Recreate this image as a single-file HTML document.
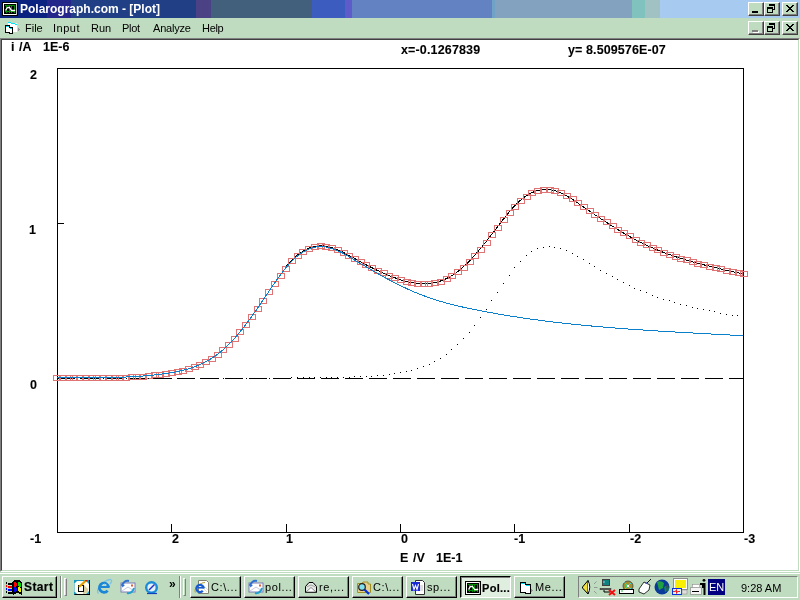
<!DOCTYPE html>
<html><head><meta charset="utf-8">
<style>
*{margin:0;padding:0;box-sizing:border-box}
html,body{-webkit-font-smoothing:antialiased;width:800px;height:600px;overflow:hidden;background:#C0DCC0;font-family:"Liberation Sans",sans-serif}
.abs{position:absolute}
.t{position:absolute;white-space:nowrap;line-height:1;will-change:transform}
#title{left:0;top:0;width:800px;height:18px;
background:linear-gradient(to right,#0B2380 0,#0B2380 47px,#25268A 47px,#25268A 71px,#203F85 71px,#203F85 196px,#4A4284 196px,#4A4284 211px,#425F7C 211px,#425F7C 312px,#3D5CC0 312px,#3D5CC0 345px,#5E5CCB 345px,#5E5CCB 352px,#6282C2 352px,#6282C2 492px,#70A2C6 492px,#70A2C6 495px,#82A2BF 495px,#82A2BF 632px,#80C2BE 632px,#80C2BE 645px,#A0C2C2 645px,#A0C2C2 660px,#A6CAF0 660px)}
.btn{position:absolute;width:16px;height:14px;background:#C0DCC0;border-style:solid;border-width:1px;border-color:#FFFFFF #404040 #404040 #FFFFFF;box-shadow:inset -1px -1px 0 #808080}
.menu{font-size:11px;color:#000;top:23px}
.ax{font-size:12.5px;font-weight:bold;color:#000;-webkit-text-stroke:0.1px #000}
.tb{position:absolute;top:576px;height:22px;background:#C0DCC0;border-style:solid;border-width:1px;border-color:#FFF #000 #000 #FFF;box-shadow:inset -1px -1px 0 #808080}
.tbt{font-size:11px;color:#000;position:absolute;top:5px;white-space:nowrap;line-height:1}
</style></head><body>
<div id="title" class="abs"></div>
<!-- title icon -->
<svg class="abs" style="left:0;top:0" width="20" height="18" viewBox="0 0 20 18" shape-rendering="crispEdges">
<rect x="2" y="2" width="16" height="14" fill="#000"/>
<rect x="3" y="3" width="14" height="12" fill="#fff"/>
<rect x="16" y="3" width="1" height="12" fill="#C8C8C8"/>
<rect x="4" y="4" width="12" height="10" fill="#000"/>
<path d="M5 5h10v1h-10zM5 11h10v1h-10zM6 5h1v8h-1zM9 5h1v8h-1zM11 5h1v8h-1zM14 5h1v8h-1z" fill="#008C00"/>
<path d="M5.5 10.5 L7.5 7.5 H9.5 L11.5 10.5 H14.5 L15 10" stroke="#fff" stroke-width="1.3" fill="none" shape-rendering="auto"/>
</svg>
<div class="t" style="left:20px;top:3px;font-size:12px;font-weight:bold;color:#fff">Polarograph.com - [Plot]</div>
<!-- title buttons -->
<div class="btn" style="left:748px;top:2px"><div class="abs" style="left:3px;top:8px;width:6px;height:2px;background:#000"></div></div>
<div class="btn" style="left:764px;top:2px"><svg class="abs" style="left:-1px;top:-1px" width="16" height="14" shape-rendering="crispEdges"><path d="M5 2h6v2h-6zM10 4h1v4h-1zM8 7h3v1h-3zM3 5h6v2h-6zM3 7h1v4h-1zM8 7h1v4h-1zM3 10h6v1h-6z" fill="#000"/></svg></div>
<div class="btn" style="left:782px;top:2px"><svg class="abs" style="left:-1px;top:-1px" width="16" height="14" shape-rendering="crispEdges"><path d="M4 3h2v1h-2zM10 3h2v1h-2zM5 4h2v1h-2zM9 4h2v1h-2zM6 5h4v1h-4zM7 6h2v1h-2zM6 7h4v1h-4zM5 8h2v1h-2zM9 8h2v1h-2zM4 9h2v1h-2zM10 9h2v1h-2z" fill="#000"/></svg></div>
<!-- menu bar -->
<svg class="abs" style="left:0;top:18px" width="22" height="18" viewBox="0 0 22 18" shape-rendering="crispEdges">
<path d="M8 4h3v1h6v9h-9z" fill="#fff"/>
<path d="M7 4h1v1h-1zM11 4h1v1h-1zM17 5h1v1h-1zM17 6h1v8h-1z" fill="#E8D0D0"/>
<path d="M8 4h3v1h-3zM11 5h4v1h-4zM15 6h2v1h-2z" fill="#00E8F8"/>
<path d="M18 10h1v3h-1zM19 11h1v1h-1z" fill="#909090"/>
<path d="M6 8h3v6h-3zM9 10h3v5h-3z" fill="#fff"/>
<path d="M5 7h4v1h-4zM5 7h1v8h-1zM9 7h1v3h-1zM9 9h4v1h-4zM12 9h1v7h-1zM5 14h4v1h-4zM9 14h1v2h-1zM9 15h4v1h-4z" fill="#000"/>
<path d="M6 8h3v1h-3zM10 10h2v1h-2z" fill="#00E0F0"/>
</svg>
<div class="t menu" style="left:25px">File</div>
<div class="t menu" style="left:53px;letter-spacing:0.5px">Input</div>
<div class="t menu" style="left:91px">Run</div>
<div class="t menu" style="left:122px;letter-spacing:-0.3px">Plot</div>
<div class="t menu" style="left:153px;letter-spacing:-0.2px">Analyze</div>
<div class="t menu" style="left:202px;letter-spacing:-0.3px">Help</div>
<div class="btn" style="left:748px;top:21px"><div class="abs" style="left:3px;top:8px;width:6px;height:2px;background:#808080;box-shadow:1px 1px 0 #fff"></div></div>
<div class="btn" style="left:764px;top:21px"><svg class="abs" style="left:-1px;top:-1px" width="16" height="14" shape-rendering="crispEdges"><path d="M5 2h6v2h-6zM10 4h1v4h-1zM8 7h3v1h-3zM3 5h6v2h-6zM3 7h1v4h-1zM8 7h1v4h-1zM3 10h6v1h-6z" fill="#000"/></svg></div>
<div class="btn" style="left:782px;top:21px"><svg class="abs" style="left:-1px;top:-1px" width="16" height="14" shape-rendering="crispEdges"><path d="M4 3h2v1h-2zM10 3h2v1h-2zM5 4h2v1h-2zM9 4h2v1h-2zM6 5h4v1h-4zM7 6h2v1h-2zM6 7h4v1h-4zM5 8h2v1h-2zM9 8h2v1h-2zM4 9h2v1h-2zM10 9h2v1h-2z" fill="#000"/></svg></div>
<!-- client area -->
<div class="abs" style="left:0;top:38px;width:800px;height:534px;background:#fff;border-style:solid;border-width:1px;border-color:#808080 #fff #fff #808080"></div>
<div class="abs" style="left:1px;top:39px;width:798px;height:532px;border-style:solid;border-width:1px;border-color:#404040 #C0DCC0 #C0DCC0 #404040"></div>
<!-- plot -->
<svg class="abs" style="left:0;top:0" width="800" height="600" viewBox="0 0 800 600" shape-rendering="auto">
<rect x="57.5" y="68.5" width="686" height="464" fill="none" stroke="#000" stroke-width="1"/>
<path d="M57 223.5h7M57 378.5h7M171.5 524v8M286.5 524v8M400.5 524v8M514.5 524v8M629.5 524v8" stroke="#000" stroke-width="1"/>
<path d="M57 378.5H743" stroke="#000" stroke-width="1" stroke-dasharray="18 6" shape-rendering="crispEdges"/>
<path d="M57.0 377.46 L59.0 377.46 L61.0 377.47 L63.0 377.47 L65.0 377.48 L67.0 377.49 L69.0 377.51 L71.0 377.52 L73.0 377.53 L75.0 377.54 L77.0 377.55 L79.0 377.57 L81.0 377.58 L83.0 377.59 L85.0 377.60 L87.0 377.60 L89.0 377.61 L91.0 377.61 L93.0 377.61 L95.0 377.61 L97.0 377.60 L99.0 377.59 L101.0 377.58 L103.0 377.56 L105.0 377.54 L107.0 377.52 L109.0 377.49 L111.0 377.46 L113.0 377.42 L115.0 377.37 L117.0 377.32 L119.0 377.26 L121.0 377.20 L123.0 377.13 L125.0 377.05 L127.0 376.97 L129.0 376.88 L131.0 376.78 L133.0 376.67 L135.0 376.55 L137.0 376.43 L139.0 376.30 L141.0 376.15 L143.0 376.00 L145.0 375.84 L147.0 375.67 L149.0 375.49 L151.0 375.29 L153.0 375.09 L155.0 374.88 L157.0 374.65 L159.0 374.41 L161.0 374.17 L163.0 373.90 L165.0 373.63 L167.0 373.34 L169.0 373.04 L171.0 372.72 L173.0 372.38 L175.0 372.02 L177.0 371.64 L179.0 371.22 L181.0 370.78 L183.0 370.30 L185.0 369.79 L187.0 369.24 L189.0 368.65 L191.0 368.01 L193.0 367.33 L195.0 366.60 L197.0 365.82 L199.0 364.98 L201.0 364.09 L203.0 363.14 L205.0 362.13 L207.0 361.05 L209.0 359.91 L211.0 358.70 L213.0 357.41 L215.0 356.05 L217.0 354.61 L219.0 353.10 L221.0 351.50 L223.0 349.81 L225.0 348.04 L227.0 346.17 L229.0 344.22 L231.0 342.17 L233.0 340.03 L235.0 337.80 L237.0 335.50 L239.0 333.11 L241.0 330.66 L243.0 328.14 L245.0 325.55 L247.0 322.91 L249.0 320.21 L251.0 317.46 L253.0 314.66 L255.0 311.82 L257.0 308.95 L259.0 306.04 L261.0 303.10 L263.0 300.14 L265.0 297.16 L267.0 294.18 L269.0 291.20 L271.0 288.23 L273.0 285.29 L275.0 282.39 L277.0 279.55 L279.0 276.76 L281.0 274.05 L283.0 271.43 L285.0 268.91 L287.0 265.45 L289.0 263.16 L291.0 261.01 L293.0 259.00 L295.0 257.14 L297.0 255.43 L299.0 253.86 L301.0 252.43 L303.0 251.15 L305.0 250.00 L307.0 249.00 L309.0 248.13 L311.0 247.40 L313.0 246.80 L315.0 246.34 L317.0 246.01 L319.0 245.81 L321.0 245.74 L323.0 245.79 L325.0 245.98 L327.0 246.28 L329.0 246.71 L331.0 247.24 L333.0 247.88 L335.0 248.60 L337.0 249.41 L339.0 250.28 L341.0 251.22 L343.0 252.21 L345.0 253.25 L347.0 254.32 L349.0 255.41 L351.0 256.52 L353.0 257.64 L355.0 258.75 L357.0 259.86 L359.0 260.95 L361.0 262.03 L363.0 263.11 L365.0 264.16 L367.0 265.21 L369.0 266.24 L371.0 267.25 L373.0 268.25 L375.0 269.23 L377.0 270.19 L379.0 271.13 L381.0 272.05 L383.0 272.95 L385.0 273.82 L387.0 274.68 L389.0 275.51 L391.0 276.31 L393.0 277.09 L395.0 277.84 L397.0 278.56 L399.0 279.25 L401.0 279.90 L403.0 280.51 L405.0 281.09 L407.0 281.62 L409.0 282.09 L411.0 282.52 L413.0 282.89 L415.0 283.21 L417.0 283.46 L419.0 283.65 L421.0 283.77 L423.0 283.82 L425.0 283.80 L427.0 283.70 L429.0 283.53 L431.0 283.29 L433.0 282.96 L435.0 282.55 L437.0 282.06 L439.0 281.49 L441.0 280.82 L443.0 280.07 L445.0 279.23 L447.0 278.29 L449.0 277.25 L451.0 276.12 L453.0 274.89 L455.0 273.55 L457.0 272.11 L459.0 270.57 L461.0 268.92 L463.0 267.18 L465.0 265.34 L467.0 263.42 L469.0 261.42 L471.0 259.34 L473.0 257.19 L475.0 254.96 L477.0 252.68 L479.0 250.34 L481.0 247.95 L483.0 245.51 L485.0 243.02 L487.0 240.50 L489.0 237.94 L491.0 235.35 L493.0 232.74 L495.0 230.11 L497.0 227.48 L499.0 224.85 L501.0 222.25 L503.0 219.67 L505.0 217.14 L507.0 214.66 L509.0 212.25 L511.0 209.92 L513.0 207.67 L515.0 205.53 L517.0 203.51 L519.0 201.60 L521.0 199.84 L523.0 198.22 L525.0 196.74 L527.0 195.39 L529.0 194.19 L531.0 193.13 L533.0 192.20 L535.0 191.42 L537.0 190.76 L539.0 190.24 L541.0 189.85 L543.0 189.60 L545.0 189.47 L547.0 189.47 L549.0 189.61 L551.0 189.87 L553.0 190.25 L555.0 190.76 L557.0 191.39 L559.0 192.14 L561.0 192.99 L563.0 193.93 L565.0 194.96 L567.0 196.06 L569.0 197.23 L571.0 198.46 L573.0 199.74 L575.0 201.06 L577.0 202.41 L579.0 203.78 L581.0 205.17 L583.0 206.56 L585.0 207.95 L587.0 209.33 L589.0 210.71 L591.0 212.08 L593.0 213.45 L595.0 214.80 L597.0 216.15 L599.0 217.49 L601.0 218.83 L603.0 220.15 L605.0 221.46 L607.0 222.76 L609.0 224.04 L611.0 225.32 L613.0 226.58 L615.0 227.83 L617.0 229.07 L619.0 230.28 L621.0 231.49 L623.0 232.68 L625.0 233.85 L627.0 235.00 L629.0 236.14 L631.0 237.25 L633.0 238.35 L635.0 239.43 L637.0 240.49 L639.0 241.53 L641.0 242.54 L643.0 243.53 L645.0 244.50 L647.0 245.45 L649.0 246.37 L651.0 247.27 L653.0 248.15 L655.0 249.00 L657.0 249.84 L659.0 250.65 L661.0 251.45 L663.0 252.22 L665.0 252.98 L667.0 253.72 L669.0 254.44 L671.0 255.14 L673.0 255.83 L675.0 256.50 L677.0 257.16 L679.0 257.80 L681.0 258.43 L683.0 259.05 L685.0 259.65 L687.0 260.24 L689.0 260.82 L691.0 261.39 L693.0 261.95 L695.0 262.49 L697.0 263.03 L699.0 263.57 L701.0 264.09 L703.0 264.61 L705.0 265.12 L707.0 265.62 L709.0 266.12 L711.0 266.61 L713.0 267.10 L715.0 267.58 L717.0 268.06 L719.0 268.54 L721.0 269.01 L723.0 269.47 L725.0 269.93 L727.0 270.39 L729.0 270.85 L731.0 271.29 L733.0 271.74 L735.0 272.18 L737.0 272.62 L739.0 273.05 L741.0 273.48 L743.0 273.91" fill="none" stroke="#000" stroke-width="1" shape-rendering="crispEdges"/>
<g fill="none" stroke="#E07474" stroke-width="1" shape-rendering="crispEdges"><rect x="53.5" y="375.5" width="7" height="5"/><rect x="59.5" y="375.5" width="7" height="5"/><rect x="65.5" y="375.5" width="7" height="5"/><rect x="70.5" y="375.5" width="7" height="5"/><rect x="76.5" y="375.5" width="7" height="5"/><rect x="82.5" y="375.5" width="7" height="5"/><rect x="88.5" y="375.5" width="7" height="5"/><rect x="93.5" y="375.5" width="7" height="5"/><rect x="99.5" y="375.5" width="7" height="5"/><rect x="105.5" y="375.5" width="7" height="5"/><rect x="111.5" y="375.5" width="7" height="5"/><rect x="116.5" y="375.5" width="7" height="5"/><rect x="122.5" y="375.5" width="7" height="5"/><rect x="128.5" y="374.5" width="7" height="5"/><rect x="133.5" y="374.5" width="7" height="5"/><rect x="139.5" y="374.5" width="7" height="5"/><rect x="145.5" y="373.5" width="7" height="5"/><rect x="151.5" y="372.5" width="7" height="5"/><rect x="156.5" y="372.5" width="7" height="5"/><rect x="162.5" y="371.5" width="7" height="5"/><rect x="168.5" y="370.5" width="7" height="5"/><rect x="174.5" y="369.5" width="7" height="5"/><rect x="179.5" y="368.5" width="7" height="5"/><rect x="185.5" y="366.5" width="7" height="5"/><rect x="191.5" y="364.5" width="7" height="5"/><rect x="196.5" y="362.5" width="7" height="5"/><rect x="202.5" y="359.5" width="7" height="5"/><rect x="208.5" y="356.5" width="7" height="5"/><rect x="214.5" y="352.5" width="7" height="5"/><rect x="219.5" y="347.5" width="7" height="5"/><rect x="225.5" y="342.5" width="7" height="5"/><rect x="231.5" y="336.5" width="7" height="5"/><rect x="236.5" y="329.5" width="7" height="5"/><rect x="242.5" y="322.5" width="7" height="5"/><rect x="248.5" y="314.5" width="7" height="5"/><rect x="254.5" y="306.5" width="7" height="5"/><rect x="259.5" y="298.5" width="7" height="5"/><rect x="265.5" y="289.5" width="7" height="5"/><rect x="271.5" y="281.5" width="7" height="5"/><rect x="277.5" y="273.5" width="7" height="5"/><rect x="282.5" y="266.5" width="7" height="5"/><rect x="288.5" y="258.5" width="7" height="5"/><rect x="294.5" y="253.5" width="7" height="5"/><rect x="299.5" y="249.5" width="7" height="5"/><rect x="305.5" y="246.5" width="7" height="5"/><rect x="311.5" y="244.5" width="7" height="5"/><rect x="317.5" y="243.5" width="7" height="5"/><rect x="322.5" y="244.5" width="7" height="5"/><rect x="328.5" y="245.5" width="7" height="5"/><rect x="334.5" y="247.5" width="7" height="5"/><rect x="340.5" y="250.5" width="7" height="5"/><rect x="345.5" y="253.5" width="7" height="5"/><rect x="351.5" y="256.5" width="7" height="5"/><rect x="357.5" y="259.5" width="7" height="5"/><rect x="362.5" y="262.5" width="7" height="5"/><rect x="368.5" y="265.5" width="7" height="5"/><rect x="374.5" y="268.5" width="7" height="5"/><rect x="380.5" y="270.5" width="7" height="5"/><rect x="385.5" y="273.5" width="7" height="5"/><rect x="391.5" y="275.5" width="7" height="5"/><rect x="397.5" y="277.5" width="7" height="5"/><rect x="403.5" y="279.5" width="7" height="5"/><rect x="408.5" y="280.5" width="7" height="5"/><rect x="414.5" y="281.5" width="7" height="5"/><rect x="420.5" y="281.5" width="7" height="5"/><rect x="425.5" y="281.5" width="7" height="5"/><rect x="431.5" y="280.5" width="7" height="5"/><rect x="437.5" y="279.5" width="7" height="5"/><rect x="443.5" y="276.5" width="7" height="5"/><rect x="448.5" y="273.5" width="7" height="5"/><rect x="454.5" y="269.5" width="7" height="5"/><rect x="460.5" y="265.5" width="7" height="5"/><rect x="466.5" y="259.5" width="7" height="5"/><rect x="471.5" y="253.5" width="7" height="5"/><rect x="477.5" y="247.5" width="7" height="5"/><rect x="483.5" y="240.5" width="7" height="5"/><rect x="488.5" y="232.5" width="7" height="5"/><rect x="494.5" y="225.5" width="7" height="5"/><rect x="500.5" y="217.5" width="7" height="5"/><rect x="506.5" y="210.5" width="7" height="5"/><rect x="511.5" y="204.5" width="7" height="5"/><rect x="517.5" y="198.5" width="7" height="5"/><rect x="523.5" y="194.5" width="7" height="5"/><rect x="528.5" y="190.5" width="7" height="5"/><rect x="534.5" y="188.5" width="7" height="5"/><rect x="540.5" y="187.5" width="7" height="5"/><rect x="546.5" y="187.5" width="7" height="5"/><rect x="551.5" y="188.5" width="7" height="5"/><rect x="557.5" y="190.5" width="7" height="5"/><rect x="563.5" y="193.5" width="7" height="5"/><rect x="569.5" y="196.5" width="7" height="5"/><rect x="574.5" y="200.5" width="7" height="5"/><rect x="580.5" y="204.5" width="7" height="5"/><rect x="586.5" y="208.5" width="7" height="5"/><rect x="591.5" y="212.5" width="7" height="5"/><rect x="597.5" y="216.5" width="7" height="5"/><rect x="603.5" y="219.5" width="7" height="5"/><rect x="609.5" y="223.5" width="7" height="5"/><rect x="614.5" y="227.5" width="7" height="5"/><rect x="620.5" y="230.5" width="7" height="5"/><rect x="626.5" y="233.5" width="7" height="5"/><rect x="632.5" y="237.5" width="7" height="5"/><rect x="637.5" y="240.5" width="7" height="5"/><rect x="643.5" y="242.5" width="7" height="5"/><rect x="649.5" y="245.5" width="7" height="5"/><rect x="654.5" y="247.5" width="7" height="5"/><rect x="660.5" y="250.5" width="7" height="5"/><rect x="666.5" y="252.5" width="7" height="5"/><rect x="672.5" y="254.5" width="7" height="5"/><rect x="677.5" y="256.5" width="7" height="5"/><rect x="683.5" y="257.5" width="7" height="5"/><rect x="689.5" y="259.5" width="7" height="5"/><rect x="694.5" y="261.5" width="7" height="5"/><rect x="700.5" y="262.5" width="7" height="5"/><rect x="706.5" y="264.5" width="7" height="5"/><rect x="712.5" y="265.5" width="7" height="5"/><rect x="717.5" y="266.5" width="7" height="5"/><rect x="723.5" y="268.5" width="7" height="5"/><rect x="729.5" y="269.5" width="7" height="5"/><rect x="735.5" y="270.5" width="7" height="5"/><rect x="740.5" y="271.5" width="7" height="5"/></g>
<path d="M57.0 377.46 L59.0 377.46 L61.0 377.47 L63.0 377.47 L65.0 377.48 L67.0 377.49 L69.0 377.51 L71.0 377.52 L73.0 377.53 L75.0 377.54 L77.0 377.55 L79.0 377.57 L81.0 377.58 L83.0 377.59 L85.0 377.60 L87.0 377.60 L89.0 377.61 L91.0 377.61 L93.0 377.61 L95.0 377.61 L97.0 377.60 L99.0 377.59 L101.0 377.58 L103.0 377.56 L105.0 377.54 L107.0 377.52 L109.0 377.49 L111.0 377.46 L113.0 377.42 L115.0 377.37 L117.0 377.32 L119.0 377.26 L121.0 377.20 L123.0 377.13 L125.0 377.05 L127.0 376.97 L129.0 376.88 L131.0 376.78 L133.0 376.67 L135.0 376.55 L137.0 376.43 L139.0 376.30 L141.0 376.15 L143.0 376.00 L145.0 375.84 L147.0 375.67 L149.0 375.49 L151.0 375.29 L153.0 375.09 L155.0 374.88 L157.0 374.65 L159.0 374.41 L161.0 374.17 L163.0 373.90 L165.0 373.63 L167.0 373.34 L169.0 373.04 L171.0 372.72 L173.0 372.38 L175.0 372.02 L177.0 371.64 L179.0 371.22 L181.0 370.78 L183.0 370.30 L185.0 369.79 L187.0 369.24 L189.0 368.65 L191.0 368.01 L193.0 367.33 L195.0 366.60 L197.0 365.82 L199.0 364.98 L201.0 364.09 L203.0 363.14 L205.0 362.13 L207.0 361.05 L209.0 359.91 L211.0 358.70 L213.0 357.41 L215.0 356.05 L217.0 354.61 L219.0 353.10 L221.0 351.50 L223.0 349.81 L225.0 348.04 L227.0 346.17 L229.0 344.22 L231.0 342.17 L233.0 340.03 L235.0 337.80 L237.0 335.50 L239.0 333.11 L241.0 330.66 L243.0 328.14 L245.0 325.55 L247.0 322.91 L249.0 320.21 L251.0 317.46 L253.0 314.66 L255.0 311.82 L257.0 308.95 L259.0 306.04 L261.0 303.10 L263.0 300.14 L265.0 297.16 L267.0 294.18 L269.0 291.20 L271.0 288.23 L273.0 285.29 L275.0 282.39 L277.0 279.55 L279.0 276.76 L281.0 274.05 L283.0 271.43 L285.0 268.91 L287.0 266.49 L289.0 264.20 L291.0 262.04 L293.0 260.02 L295.0 258.15 L297.0 256.42 L299.0 254.84 L301.0 253.40 L303.0 252.11 L305.0 250.95 L307.0 249.94 L309.0 249.06 L311.0 248.32 L313.0 247.71 L315.0 247.24 L317.0 246.90 L319.0 246.70 L321.0 246.63 L323.0 246.69 L325.0 246.87 L327.0 247.19 L329.0 247.62 L331.0 248.17 L333.0 248.83 L335.0 249.57 L337.0 250.41 L339.0 251.32 L341.0 252.29 L343.0 253.33 L345.0 254.41 L347.0 255.54 L349.0 256.69 L351.0 257.87 L353.0 259.06 L355.0 260.26 L357.0 261.45 L359.0 262.64 L361.0 263.83 L363.0 265.01 L365.0 266.19 L367.0 267.37 L369.0 268.54 L371.0 269.70 L373.0 270.85 L375.0 272.00 L377.0 273.14 L379.0 274.27 L381.0 275.39 L383.0 276.50 L385.0 277.60 L387.0 278.68 L389.0 279.76 L391.0 280.82 L393.0 281.86 L395.0 282.90 L397.0 283.91 L399.0 284.92 L401.0 285.90 L403.0 286.87 L405.0 287.82 L407.0 288.75 L409.0 289.66 L411.0 290.56 L413.0 291.43 L415.0 292.28 L417.0 293.11 L419.0 293.92 L421.0 294.70 L423.0 295.47 L425.0 296.21 L427.0 296.93 L429.0 297.64 L431.0 298.32 L433.0 298.99 L435.0 299.64 L437.0 300.27 L439.0 300.88 L441.0 301.48 L443.0 302.06 L445.0 302.62 L447.0 303.17 L449.0 303.71 L451.0 304.24 L453.0 304.75 L455.0 305.25 L457.0 305.73 L459.0 306.21 L461.0 306.67 L463.0 307.13 L465.0 307.57 L467.0 308.01 L469.0 308.43 L471.0 308.85 L473.0 309.27 L475.0 309.67 L477.0 310.07 L479.0 310.46 L481.0 310.85 L483.0 311.24 L485.0 311.61 L487.0 311.99 L489.0 312.36 L491.0 312.72 L493.0 313.08 L495.0 313.44 L497.0 313.79 L499.0 314.14 L501.0 314.48 L503.0 314.82 L505.0 315.15 L507.0 315.48 L509.0 315.80 L511.0 316.12 L513.0 316.44 L515.0 316.75 L517.0 317.06 L519.0 317.36 L521.0 317.66 L523.0 317.96 L525.0 318.25 L527.0 318.54 L529.0 318.83 L531.0 319.11 L533.0 319.38 L535.0 319.66 L537.0 319.93 L539.0 320.19 L541.0 320.45 L543.0 320.71 L545.0 320.97 L547.0 321.22 L549.0 321.47 L551.0 321.71 L553.0 321.95 L555.0 322.19 L557.0 322.43 L559.0 322.66 L561.0 322.89 L563.0 323.11 L565.0 323.34 L567.0 323.56 L569.0 323.77 L571.0 323.99 L573.0 324.20 L575.0 324.40 L577.0 324.61 L579.0 324.81 L581.0 325.01 L583.0 325.20 L585.0 325.40 L587.0 325.59 L589.0 325.78 L591.0 325.96 L593.0 326.15 L595.0 326.33 L597.0 326.51 L599.0 326.68 L601.0 326.86 L603.0 327.03 L605.0 327.20 L607.0 327.36 L609.0 327.53 L611.0 327.69 L613.0 327.85 L615.0 328.01 L617.0 328.17 L619.0 328.32 L621.0 328.47 L623.0 328.62 L625.0 328.77 L627.0 328.92 L629.0 329.06 L631.0 329.21 L633.0 329.35 L635.0 329.49 L637.0 329.63 L639.0 329.76 L641.0 329.90 L643.0 330.03 L645.0 330.17 L647.0 330.30 L649.0 330.43 L651.0 330.56 L653.0 330.68 L655.0 330.81 L657.0 330.93 L659.0 331.06 L661.0 331.18 L663.0 331.30 L665.0 331.42 L667.0 331.54 L669.0 331.66 L671.0 331.78 L673.0 331.89 L675.0 332.01 L677.0 332.12 L679.0 332.24 L681.0 332.35 L683.0 332.46 L685.0 332.58 L687.0 332.69 L689.0 332.80 L691.0 332.91 L693.0 333.02 L695.0 333.13 L697.0 333.24 L699.0 333.35 L701.0 333.46 L703.0 333.57 L705.0 333.68 L707.0 333.79 L709.0 333.89 L711.0 334.00 L713.0 334.11 L715.0 334.22 L717.0 334.33 L719.0 334.44 L721.0 334.54 L723.0 334.65 L725.0 334.76 L727.0 334.87 L729.0 334.98 L731.0 335.09 L733.0 335.20 L735.0 335.31 L737.0 335.42 L739.0 335.53 L741.0 335.65 L743.0 335.76" fill="none" stroke="#0A80CC" stroke-width="1" shape-rendering="crispEdges"/>
<g fill="#000" shape-rendering="crispEdges"><rect x="57" y="378" width="1" height="1"/><rect x="63" y="378" width="1" height="1"/><rect x="68" y="378" width="1" height="1"/><rect x="74" y="378" width="1" height="1"/><rect x="80" y="378" width="1" height="1"/><rect x="86" y="378" width="1" height="1"/><rect x="91" y="378" width="1" height="1"/><rect x="97" y="378" width="1" height="1"/><rect x="103" y="378" width="1" height="1"/><rect x="108" y="378" width="1" height="1"/><rect x="114" y="378" width="1" height="1"/><rect x="120" y="378" width="1" height="1"/><rect x="126" y="378" width="1" height="1"/><rect x="131" y="378" width="1" height="1"/><rect x="137" y="378" width="1" height="1"/><rect x="143" y="378" width="1" height="1"/><rect x="148" y="378" width="1" height="1"/><rect x="154" y="378" width="1" height="1"/><rect x="160" y="378" width="1" height="1"/><rect x="166" y="378" width="1" height="1"/><rect x="171" y="378" width="1" height="1"/><rect x="177" y="378" width="1" height="1"/><rect x="183" y="378" width="1" height="1"/><rect x="188" y="378" width="1" height="1"/><rect x="194" y="378" width="1" height="1"/><rect x="200" y="378" width="1" height="1"/><rect x="206" y="378" width="1" height="1"/><rect x="211" y="378" width="1" height="1"/><rect x="217" y="378" width="1" height="1"/><rect x="223" y="378" width="1" height="1"/><rect x="228" y="378" width="1" height="1"/><rect x="234" y="378" width="1" height="1"/><rect x="240" y="378" width="1" height="1"/><rect x="246" y="378" width="1" height="1"/><rect x="251" y="378" width="1" height="1"/><rect x="257" y="378" width="1" height="1"/><rect x="263" y="378" width="1" height="1"/><rect x="269" y="378" width="1" height="1"/><rect x="274" y="378" width="1" height="1"/><rect x="280" y="378" width="1" height="1"/><rect x="286" y="378" width="1" height="1"/><rect x="291" y="377" width="1" height="1"/><rect x="297" y="377" width="1" height="1"/><rect x="303" y="377" width="1" height="1"/><rect x="309" y="377" width="1" height="1"/><rect x="314" y="377" width="1" height="1"/><rect x="320" y="377" width="1" height="1"/><rect x="326" y="377" width="1" height="1"/><rect x="331" y="377" width="1" height="1"/><rect x="337" y="377" width="1" height="1"/><rect x="343" y="377" width="1" height="1"/><rect x="349" y="377" width="1" height="1"/><rect x="354" y="376" width="1" height="1"/><rect x="360" y="376" width="1" height="1"/><rect x="366" y="376" width="1" height="1"/><rect x="371" y="376" width="1" height="1"/><rect x="377" y="375" width="1" height="1"/><rect x="383" y="375" width="1" height="1"/><rect x="389" y="374" width="1" height="1"/><rect x="394" y="373" width="1" height="1"/><rect x="400" y="372" width="1" height="1"/><rect x="406" y="371" width="1" height="1"/><rect x="411" y="370" width="1" height="1"/><rect x="417" y="368" width="1" height="1"/><rect x="423" y="366" width="1" height="1"/><rect x="429" y="364" width="1" height="1"/><rect x="434" y="361" width="1" height="1"/><rect x="440" y="358" width="1" height="1"/><rect x="446" y="354" width="1" height="1"/><rect x="451" y="349" width="1" height="1"/><rect x="457" y="344" width="1" height="1"/><rect x="463" y="338" width="1" height="1"/><rect x="469" y="332" width="1" height="1"/><rect x="474" y="325" width="1" height="1"/><rect x="480" y="317" width="1" height="1"/><rect x="486" y="309" width="1" height="1"/><rect x="491" y="300" width="1" height="1"/><rect x="497" y="292" width="1" height="1"/><rect x="503" y="283" width="1" height="1"/><rect x="509" y="275" width="1" height="1"/><rect x="514" y="267" width="1" height="1"/><rect x="520" y="261" width="1" height="1"/><rect x="526" y="255" width="1" height="1"/><rect x="531" y="251" width="1" height="1"/><rect x="537" y="248" width="1" height="1"/><rect x="543" y="247" width="1" height="1"/><rect x="549" y="246" width="1" height="1"/><rect x="554" y="247" width="1" height="1"/><rect x="560" y="248" width="1" height="1"/><rect x="566" y="250" width="1" height="1"/><rect x="572" y="253" width="1" height="1"/><rect x="577" y="256" width="1" height="1"/><rect x="583" y="259" width="1" height="1"/><rect x="589" y="263" width="1" height="1"/><rect x="594" y="266" width="1" height="1"/><rect x="600" y="270" width="1" height="1"/><rect x="606" y="273" width="1" height="1"/><rect x="612" y="276" width="1" height="1"/><rect x="617" y="279" width="1" height="1"/><rect x="623" y="282" width="1" height="1"/><rect x="629" y="285" width="1" height="1"/><rect x="634" y="288" width="1" height="1"/><rect x="640" y="290" width="1" height="1"/><rect x="646" y="292" width="1" height="1"/><rect x="652" y="295" width="1" height="1"/><rect x="657" y="297" width="1" height="1"/><rect x="663" y="299" width="1" height="1"/><rect x="669" y="300" width="1" height="1"/><rect x="674" y="302" width="1" height="1"/><rect x="680" y="304" width="1" height="1"/><rect x="686" y="305" width="1" height="1"/><rect x="692" y="307" width="1" height="1"/><rect x="697" y="308" width="1" height="1"/><rect x="703" y="309" width="1" height="1"/><rect x="709" y="310" width="1" height="1"/><rect x="714" y="311" width="1" height="1"/><rect x="720" y="313" width="1" height="1"/><rect x="726" y="314" width="1" height="1"/><rect x="732" y="315" width="1" height="1"/><rect x="737" y="315" width="1" height="1"/></g>
</svg>
<div class="t ax" style="left:11px;top:41px">i</div>
<div class="t ax" style="left:19px;top:41px">/A</div>
<div class="t ax" style="left:43px;top:41px">1E-6</div>
<div class="t ax" style="left:401px;top:44px;letter-spacing:0.15px">x=-0.1267839</div>
<div class="t ax" style="left:568px;top:44px;letter-spacing:0.1px">y= 8.509576E-07</div>
<div class="t ax" style="left:30px;top:69px">2</div>
<div class="t ax" style="left:29px;top:224px">1</div>
<div class="t ax" style="left:30px;top:379px">0</div>
<div class="t ax" style="left:30px;top:533px">-1</div>
<div class="t ax" style="left:172px;top:533px">2</div>
<div class="t ax" style="left:286px;top:533px">1</div>
<div class="t ax" style="left:401px;top:533px">0</div>
<div class="t ax" style="left:514px;top:533px">-1</div>
<div class="t ax" style="left:630px;top:533px">-2</div>
<div class="t ax" style="left:744px;top:533px">-3</div>
<div class="t ax" style="left:400px;top:552px">E</div>
<div class="t ax" style="left:413px;top:552px">/V</div>
<div class="t ax" style="left:436px;top:552px">1E-1</div>
<!-- taskbar -->
<div class="abs" style="left:0;top:573px;width:800px;height:1px;background:#fff"></div>
<div class="tb" style="left:2px;width:55px"></div>
<svg class="abs" style="left:0;top:576px" width="24" height="22" shape-rendering="crispEdges">
<path d="M15 4h5v1h1v1h1v13h-1v-1h-2v-1h-3v1h-2v1h-1v-14h1v-1h1z" fill="#000"/>
<path d="M13 5h1v1h-1zM12 6h1v12h-1z" fill="#000"/>
<path d="M14 6h2v1h-2zM14 7h3v3h-3zM14 10h2v1h-2z" fill="#F00"/>
<path d="M18 6h2v1h-2zM18 7h3v3h-3zM19 10h2v1h-2z" fill="#0D0"/>
<path d="M14 11h2v1h-2zM14 12h3v3h-3zM14 15h2v1h-2z" fill="#00F"/>
<path d="M18 11h2v1h-2zM18 12h3v3h-3zM19 15h2v1h-2z" fill="#EE0"/>
<path d="M6 6h1v2h-1zM6 15h1v2h-1zM8 7h4v2h-4zM8 16h4v2h-4z" fill="#000"/>
<path d="M6 9h1v2h-1zM8 10h4v2h-4z" fill="#F00"/>
<path d="M6 12h1v2h-1zM8 13h4v2h-4z" fill="#00F"/>
</svg>
<div class="t" style="left:24px;top:581px;font-size:12px;font-weight:bold;letter-spacing:0.4px;-webkit-text-stroke:0.2px #000">Start</div>
<div class="abs" style="left:60px;top:576px;width:1px;height:22px;background:#808080"></div>
<div class="abs" style="left:61px;top:576px;width:1px;height:22px;background:#fff"></div>
<div class="abs" style="left:64px;top:578px;width:3px;height:18px;border-style:solid;border-width:1px;border-color:#fff #808080 #808080 #fff"></div>
<!-- quick launch: show desktop -->
<svg class="abs" style="left:74px;top:580px" width="16" height="15" viewBox="0 0 16 15">
<rect x="0" y="0" width="16" height="15" fill="#1A9AC0"/><rect x="0.5" y="14" width="15.5" height="1" fill="#000"/><rect x="15" y="0" width="1" height="15" fill="#000"/>
<path d="M3 1 H12 L15 4 V11 L12 14 H3 L0.5 11.5 V3.5 Z" fill="#FFFDF0"/>
<path d="M9 4 L14 9 V12 L11 14 H9z" fill="#D8D0A0"/>
<rect x="4.5" y="5.5" width="5" height="6" fill="#fff" stroke="#000" stroke-width="1"/>
<path d="M5 7 L12 0.5" stroke="#E0A000" stroke-width="2.2"/><path d="M11.5 1 L13 -0.5" stroke="#E02000" stroke-width="2"/>
</svg>
<!-- IE -->
<svg class="abs" style="left:96px;top:578px" width="17" height="17" viewBox="0 0 17 17">
<path d="M2.5 15.5 Q0 13 4 8 Q9 2 14.5 1.5 Q17 2.5 14 6" stroke="#78C4EC" stroke-width="1.3" fill="none"/>
<path d="M12.6 9.3 A4.6 4.6 0 1 0 11.6 12.6" stroke="#1C86D6" stroke-width="2.8" fill="none"/>
<path d="M5 9 H13.5" stroke="#1C86D6" stroke-width="2"/>
<path d="M6.5 7 Q8.5 5.5 10.5 7" stroke="#BFE0F6" stroke-width="1" fill="none"/>
</svg>
<!-- Outlook Express -->
<svg class="abs" style="left:120px;top:579px" width="16" height="16" viewBox="0 0 16 16">
<rect x="1" y="4" width="14" height="9" fill="#fff" stroke="#7A78B8" stroke-width="1"/>
<path d="M2 12 L8 8 L14 12" stroke="#C8C8E0" fill="none"/>
<path d="M9 2 Q4 1 2 7" stroke="#3070D0" stroke-width="2" fill="none"/><path d="M1 5 L2.5 8.5 L5 6z" fill="#3070D0"/>
<path d="M7 14 Q12 15 14 9" stroke="#20A0D0" stroke-width="2" fill="none"/>
<rect x="11" y="5.5" width="2" height="2" fill="#E06030"/>
</svg>
<!-- QuickTime -->
<svg class="abs" style="left:144px;top:580px" width="15" height="15" viewBox="0 0 15 15">
<circle cx="7.5" cy="7.5" r="5.3" fill="#E6F2F6" stroke="#1A8CD8" stroke-width="2.4"/>
<path d="M5 10 L10.5 4.5" stroke="#2030C8" stroke-width="1.4"/>
<path d="M3 13.5 H13" stroke="#1040C0" stroke-width="1.2"/>
</svg>
<div class="t" style="left:169px;top:578px;font-size:12px;font-weight:bold">»</div>
<div class="abs" style="left:179px;top:576px;width:1px;height:22px;background:#808080"></div>
<div class="abs" style="left:180px;top:576px;width:1px;height:22px;background:#fff"></div>
<div class="abs" style="left:183px;top:578px;width:3px;height:18px;border-style:solid;border-width:1px;border-color:#fff #808080 #808080 #fff"></div>
<div class="tb" style="left:190px;width:51px"><span class="tbt" style="left:20px;letter-spacing:0.6px">C:\...</span>
<svg class="abs" style="left:3px;top:2px" width="17" height="16" viewBox="0 0 17 16">
<path d="M4.5 1.5 H12.5 L14.5 3.5 V14.5 H4.5Z" fill="#fff" stroke="#808070" stroke-width="1"/>
<path d="M9 6 L14 11 M9 9 L13 13" stroke="#E0E0D0"/>
<path d="M1.5 13.5 Q0 11 3 8 Q7 3.5 11 3.5" stroke="#C0A040" stroke-width="1.1" fill="none"/>
<path d="M9.6 9.2 A3.6 3.6 0 1 0 8.8 11.8" stroke="#1A5CD0" stroke-width="2.3" fill="none"/>
<path d="M3.5 8.8 H10.5" stroke="#1A5CD0" stroke-width="1.6"/>
</svg></div>
<div class="tb" style="left:244px;width:51px"><span class="tbt" style="left:20px;letter-spacing:0.6px">pol...</span>
<svg class="abs" style="left:3px;top:2px" width="16" height="16" viewBox="0 0 16 16">
<rect x="1" y="4" width="14" height="9" fill="#fff" stroke="#7A78B8" stroke-width="1"/>
<path d="M2 12 L8 8 L14 12" stroke="#C8C8E0" fill="none"/>
<path d="M9 2 Q4 1 2 7" stroke="#3070D0" stroke-width="2" fill="none"/><path d="M1 5 L2.5 8.5 L5 6z" fill="#3070D0"/>
<path d="M7 14 Q12 15 14 9" stroke="#20A0D0" stroke-width="2" fill="none"/>
<rect x="11" y="5.5" width="2" height="2" fill="#E06030"/>
</svg></div>
<div class="tb" style="left:298px;width:51px"><span class="tbt" style="left:20px;letter-spacing:0.6px">re,...</span>
<svg class="abs" style="left:5px;top:4px" width="14" height="13" viewBox="0 0 14 13">
<path d="M1.5 5.5 L5 1.5 H9 L12.5 5.5 V11.5 H1.5Z" fill="#E4E8E4" stroke="#000" stroke-width="1"/>
<path d="M2 11 L7 6.5 L12 11Z" fill="#fff" stroke="#707070" stroke-width="0.8"/>
<path d="M2.5 6 L7 4 L11.5 6" stroke="#909090" stroke-width="0.8" fill="none"/>
</svg></div>
<div class="tb" style="left:352px;width:51px"><span class="tbt" style="left:20px;letter-spacing:0.6px">C:\...</span>
<svg class="abs" style="left:3px;top:2px" width="17" height="17" viewBox="0 0 17 17">
<path d="M1.5 4.5 H6 L7 3 H12 V5 H14.5 V13.5 H1.5Z" fill="#E8D090" stroke="#A09020" stroke-width="1"/>
<circle cx="6" cy="8" r="3.3" fill="#80E0F0" stroke="#202020" stroke-width="1.2"/>
<path d="M8.5 10.5 L13 15" stroke="#0030E0" stroke-width="2.2"/>
</svg></div>
<div class="tb" style="left:406px;width:51px"><span class="tbt" style="left:20px;letter-spacing:0.6px">sp...</span>
<svg class="abs" style="left:3px;top:2px" width="17" height="17" viewBox="0 0 17 17">
<path d="M5.5 1.5 H12.5 L14.5 3.5 V15.5 H5.5Z" fill="#fff" stroke="#303030" stroke-width="1"/>
<path d="M9 7h4M9 9h4M9 11h4" stroke="#C0C0C0"/>
<rect x="1" y="3" width="9" height="9" fill="#1A2AD0"/>
<path d="M2.5 5 L4 10.5 L5.5 6.5 L7 10.5 L8.5 5" stroke="#fff" stroke-width="1.1" fill="none"/>
</svg></div>
<div class="tb" style="left:460px;width:51px;border-color:#000 #fff #fff #000;box-shadow:inset 1px 1px 0 #808080;background-color:#E0EEE0"><span class="tbt" style="left:21px;top:6px;font-weight:bold;letter-spacing:0.3px;-webkit-text-stroke:0.2px #000">Pol...</span>
<svg class="abs" style="left:2px;top:3px" width="20" height="18" viewBox="0 0 20 18" shape-rendering="crispEdges">
<rect x="2" y="1" width="16" height="14" fill="#000"/>
<rect x="3" y="2" width="14" height="12" fill="#fff"/>
<rect x="16" y="2" width="1" height="12" fill="#C8C8C8"/>
<rect x="4" y="3" width="12" height="10" fill="#000"/>
<path d="M5 4h10v1h-10zM5 10h10v1h-10zM6 4h1v8h-1zM9 4h1v8h-1zM11 4h1v8h-1zM14 4h1v8h-1z" fill="#008C00"/>
<path d="M5.5 9.5 L7.5 6.5 H9.5 L11.5 9.5 H14.5 L15 9" stroke="#fff" stroke-width="1.3" fill="none" shape-rendering="auto"/>
</svg></div>
<div class="tb" style="left:514px;width:51px"><span class="tbt" style="left:20px;letter-spacing:0.6px">Me...</span>
<svg class="abs" style="left:0;top:0" width="20" height="20" shape-rendering="crispEdges"><path d="M6 6h4v9h-4zM10 8h5v8h-5z" fill="#fff"/><path d="M5 5h5v1h-5zM10 5h1v3h-1zM10 7h6v1h-6zM15 7h1v10h-1zM5 5h1v11h-1zM5 15h6v1h-6zM10 15h1v2h-1zM10 16h6v1h-6z" fill="#000"/><path d="M6 6h4v1h-4zM11 8h4v1h-4z" fill="#00E0F0"/><path d="M16 12h1v3h-1zM17 13h1v1h-1z" fill="#909090"/></svg></div>
<div class="abs" style="left:578px;top:576px;width:220px;height:22px;border-style:solid;border-width:1px;border-color:#808080 #fff #fff #808080"></div>
<!-- tray icons -->
<svg class="abs" style="left:580px;top:578px" width="150" height="18" viewBox="0 0 150 18">
<!-- speaker -->
<path d="M2.5 9 L8 2.5 V16 L2.5 10z" fill="#F0E040" stroke="#000" stroke-width="1"/><path d="M8 2.5 Q11.5 9 8 16" fill="#fff" stroke="#000" stroke-width="1"/>
<path d="M14 6 L16.5 3.5 M14 9.5 H17.5 M14 13 L16.5 15.5" stroke="#909090" stroke-width="0.9"/>
<!-- network -->
<rect x="22.5" y="1.5" width="7" height="6" fill="#108080" stroke="#404040"/><rect x="23.5" y="3" width="1" height="2" fill="#80E0E0"/>
<path d="M20 10.5 H31 V11.5 H20z" fill="#E0E0E0" stroke="#303030" stroke-width="0.8"/><path d="M24 12 V14 H30" stroke="#000" fill="none"/>
<path d="M29 12 L35 17 M35 12 L29 17" stroke="#F01010" stroke-width="2"/>
<!-- CD -->
<circle cx="48" cy="8" r="5" fill="#A09030" stroke="#404040" stroke-width="0.8"/><path d="M44.5 4.5 L51.5 11.5 M45 11 L51 5" stroke="#40E0E0" stroke-width="1"/><path d="M45 5 L48 8 L46 10z" fill="#40D040"/><circle cx="48" cy="8" r="1.2" fill="#fff"/>
<rect x="39.5" y="11.5" width="14" height="4" fill="#fff" stroke="#000" stroke-width="1"/><rect x="41" y="12.5" width="2" height="1" fill="#20C040"/>
<!-- mouse -->
<path d="M59 11 L64 4 L70 7 L69 12 L64 16 L59 14z" fill="#fff" stroke="#000" stroke-width="0.8"/><path d="M67 5 L71 1" stroke="#000" stroke-width="0.9"/><circle cx="66" cy="5" r="0.8" fill="#2040FF"/>
<!-- globe -->
<circle cx="82" cy="9" r="7.5" fill="#0A3A9A"/><path d="M77 4 Q81 2 84 5 L83 10 L79 12z" fill="#20A040"/><path d="M84 9 L88 7 L89 12 L85 14z" fill="#108070"/>
<path d="M86 9h3M87 6v7" stroke="#404040" stroke-width="0.8"/>
<!-- monitor -->
<rect x="93.5" y="0.5" width="14" height="11" fill="#fff" stroke="#909090"/><rect x="95" y="2" width="11" height="8" fill="#F8F000"/>
<rect x="92" y="10" width="10" height="7" fill="#0A30E0"/><rect x="93" y="11" width="8" height="5" fill="#D8F4FF"/><path d="M93 13.5h2.5l1-2v4l1-2h2.5" stroke="#F02020" fill="none" stroke-width="1"/>
<rect x="102" y="12" width="5" height="4" fill="#E0E0E0" stroke="#909090" stroke-width="0.6"/>
<!-- printer + person -->
<path d="M110.5 9.5 H121.5 V16.5 H110.5z" fill="#F4F4F4" stroke="#909090" stroke-width="0.8"/><rect x="112.5" y="6.5" width="7" height="3" fill="#fff" stroke="#909090" stroke-width="0.6"/><path d="M112 13.5h7" stroke="#000" stroke-width="1"/>
<circle cx="124" cy="2.3" r="1.4" fill="#000"/><path d="M120 5 H125.5 V17 H123.5 V10 H122 V7 H120z" fill="#000"/>
</svg>
<div class="abs" style="left:708px;top:579px;width:17px;height:16px;background:#000080"></div>
<div class="t" style="left:709px;top:582px;font-size:11px;color:#fff">EN</div>
<div class="t" style="left:741px;top:583px;font-size:11px">9:28 AM</div>
</body></html>
